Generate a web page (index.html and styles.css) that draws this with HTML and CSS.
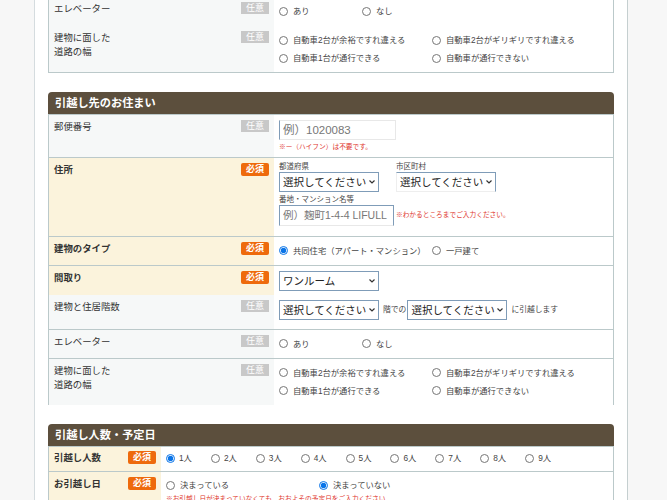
FILE: index.html
```html
<!DOCTYPE html>
<html lang="ja">

<head>
    <meta charset="UTF-8">
    <title>引越し見積もり</title>
    <link rel="stylesheet" href="styles.css">
</head>

<body>
    <div class="page">
        <!-- 現在のお住まい (top cut off by the scroll position) -->
        <section class="section section-cut">
            <table class="form-table">
                <tr class="row-plain row-short row-open">
                    <th><div class="label"><span>エレベーター</span><span class="badge">任意</span></div></th>
                    <td>
                        <div class="choices choices-lift">
                            <label><input type="radio" name="lift1">あり</label>
                            <label><input type="radio" name="lift1">なし</label>
                        </div>
                    </td>
                </tr>
                <tr class="row-road">
                    <th><div class="label"><span>建物に面した<br>道路の幅</span><span class="badge">任意</span></div></th>
                    <td>
                        <div class="choices choices-road">
                            <label><input type="radio" name="road1">自動車2台が余裕ですれ違える</label>
                            <label><input type="radio" name="road1">自動車2台がギリギリですれ違える</label>
                            <label><input type="radio" name="road1">自動車1台が通行できる</label>
                            <label><input type="radio" name="road1">自動車が通行できない</label>
                        </div>
                    </td>
                </tr>
            </table>
        </section>

        <section class="section">
            <h2 class="section-title">引越し先のお住まい</h2>
            <table class="form-table form-table-top">
                <tr class="row-zip">
                    <th><div class="label"><span>郵便番号</span><span class="badge">任意</span></div></th>
                    <td>
                        <input class="text-input zip-input" type="text" placeholder="例）1020083">
                        <p class="note note-zip">※ー（ハイフン）は不要です。</p>
                    </td>
                </tr>
                <tr class="row-address row-required">
                    <th><div class="label"><span>住所</span><span class="badge badge-required">必須</span></div></th>
                    <td class="address-cell">
                        <div class="address-selects">
                            <div>
                                <div class="sub-label">都道府県</div>
                                <select class="select"><option>選択してください</option></select>
                            </div>
                            <div>
                                <div class="sub-label">市区町村</div>
                                <select class="select select-off"><option>選択してください</option></select>
                            </div>
                        </div>
                        <div class="sub-label sub-label-street">番地・マンション名等</div>
                        <div class="street-line">
                            <input class="text-input street-input" type="text" placeholder="例）麹町1-4-4 LIFULL">
                            <span class="note">※わかるところまでご入力ください。</span>
                        </div>
                    </td>
                </tr>
                <tr class="row-type row-required">
                    <th><div class="label"><span>建物のタイプ</span><span class="badge badge-required">必須</span></div></th>
                    <td>
                        <div class="choices choices-road">
                            <label><input type="radio" name="type" checked>共同住宅（アパート・マンション）</label>
                            <label><input type="radio" name="type">一戸建て</label>
                        </div>
                    </td>
                </tr>
                <tr class="row-plan row-required row-open">
                    <th><div class="label"><span>間取り</span><span class="badge badge-required">必須</span></div></th>
                    <td><select class="select"><option>ワンルーム</option></select></td>
                </tr>
                <tr class="row-floor row-plain">
                    <th><div class="label"><span>建物と住居階数</span><span class="badge">任意</span></div></th>
                    <td>
                        <div class="floor-line">
                            <select class="select"><option>選択してください</option></select>
                            <span class="floor-text">階での</span>
                            <select class="select"><option>選択してください</option></select>
                            <span class="floor-text">に引越します</span>
                        </div>
                    </td>
                </tr>
                <tr class="row-plain row-short">
                    <th><div class="label"><span>エレベーター</span><span class="badge">任意</span></div></th>
                    <td>
                        <div class="choices choices-lift">
                            <label><input type="radio" name="lift2">あり</label>
                            <label><input type="radio" name="lift2">なし</label>
                        </div>
                    </td>
                </tr>
                <tr class="row-road row-road-last row-open">
                    <th><div class="label"><span>建物に面した<br>道路の幅</span><span class="badge">任意</span></div></th>
                    <td>
                        <div class="choices choices-road">
                            <label><input type="radio" name="road2">自動車2台が余裕ですれ違える</label>
                            <label><input type="radio" name="road2">自動車2台がギリギリですれ違える</label>
                            <label><input type="radio" name="road2">自動車1台が通行できる</label>
                            <label><input type="radio" name="road2">自動車が通行できない</label>
                        </div>
                    </td>
                </tr>
            </table>
        </section>

        <section class="section">
            <h2 class="section-title">引越し人数・予定日</h2>
            <table class="form-table form-table-top form-table-narrow">
                <tr class="row-people row-required">
                    <th><div class="label"><span>引越し人数</span><span class="badge badge-required">必須</span></div></th>
                    <td>
                        <div class="choices choices-people">
                            <label><input type="radio" name="people" checked>1人</label>
                            <label><input type="radio" name="people">2人</label>
                            <label><input type="radio" name="people">3人</label>
                            <label><input type="radio" name="people">4人</label>
                            <label><input type="radio" name="people">5人</label>
                            <label><input type="radio" name="people">6人</label>
                            <label><input type="radio" name="people">7人</label>
                            <label><input type="radio" name="people">8人</label>
                            <label><input type="radio" name="people">9人</label>
                        </div>
                    </td>
                </tr>
                <tr class="row-date row-required">
                    <th><div class="label"><span>お引越し日</span><span class="badge badge-required">必須</span></div></th>
                    <td>
                        <div class="choices choices-road">
                            <label><input type="radio" name="date">決まっている</label>
                            <label><input type="radio" name="date" checked>決まっていない</label>
                        </div>
                        <p class="note">※お引越し日が決まっていなくても、おおよその予定日をご入力ください</p>
                    </td>
                </tr>
            </table>
        </section>
    </div>
</body>

</html>
```

FILE: styles.css
```css
html, body {
    margin: 0;
    padding: 0;
    height: 500px;
    overflow: hidden;
    background: #f7f7f7;
    font-family: "Liberation Sans", "Noto Sans CJK JP", sans-serif;
    color: #444;
}

.page {
    box-sizing: border-box;
    width: 594px;
    min-height: 520px;
    margin-left: 34px;
    padding: 0 13px;
    background: #fff;
    border-left: 1px solid #d5dcdf;
    border-right: 1px solid #c5cfd0;
}

.section {
    margin-bottom: 19px;
}

.section-cut {
    margin-top: -3px;
}

.section-cut .form-table {
    border-bottom: 1px solid #bbc9ca;
}

.section-title {
    height: 22px;
    margin: 0;
    padding-left: 7px;
    background: #5c4f3d;
    border-radius: 4px 4px 0 0;
    color: #fff;
    font-size: 11.2px;
    font-weight: 700;
    line-height: 23px;
}

.form-table {
    width: 100%;
    table-layout: fixed;
    border-collapse: collapse;
    border-left: 1px solid #bbc9ca;
    border-right: 1px solid #bbc9ca;
}

.form-table-top {
    border-top: 1px solid #bbc9ca;
}

.form-table tr {
    border-bottom: 1px solid #bbc9ca;
}

.form-table tr.row-open {
    border-bottom: none;
}

.form-table th,
.form-table td {
    padding: 0;
    vertical-align: top;
}

.form-table th {
    width: 225px;
    background: #f6f8f8;
    font-weight: 400;
    text-align: left;
}

.form-table td {
    padding: 5px 0 0 5px;
    background: #fff;
}

.form-table-narrow th {
    width: 112px;
}

.form-table .row-required th {
    background: #fbf3dc;
    font-weight: 700;
}

.row-short { height: 29px; }
.row-road { height: 46px; }
.row-road-last { height: 47px; }
.row-zip { height: 43px; }
.row-address { height: 79px; }
.row-type { height: 29px; }
.row-plan { height: 30px; }
.row-floor { height: 34px; }
.row-people { height: 25px; }
.row-date { height: 30px; }

.label {
    display: flex;
    justify-content: space-between;
    align-items: flex-start;
    padding: 5px 5px 0 5px;
    font-size: 9.4px;
    line-height: 14px;
    color: #333;
}

.badge {
    flex: none;
    width: 28px;
    height: 12px;
    background: #c8c8c8;
    color: #fff;
    font-size: 9px;
    font-weight: 400;
    line-height: 12px;
    text-align: center;
}

.badge-required {
    height: 13px;
    background: #ee6a0c;
    border-radius: 2px;
    font-weight: 700;
    line-height: 13px;
}

.choices {
    display: grid;
    font-size: 8.3px;
    line-height: 18px;
}

.choices label {
    display: flex;
    align-items: center;
    white-space: nowrap;
}

.choices input {
    flex: none;
    width: 9px;
    height: 9px;
    margin: 0 5px 0 0;
    accent-color: #0a74e8;
}

.choices-lift { grid-template-columns: 83px 83px; }
.choices-road { grid-template-columns: 153px 153px; }
.choices-people { grid-template-columns: repeat(9, 44.9px); }

.form-table .row-people td { padding-top: 2px; }
.row-people .label { padding-top: 4px; }
.row-people input { margin-right: 4px; }
.form-table .row-date td { padding-top: 4px; }

.text-input {
    display: block;
    box-sizing: border-box;
    margin: 0;
    padding: 0 3px;
    border: 1px solid #7f9cb8;
    border-radius: 0;
    background: #fff;
    font-family: inherit;
    outline: none;
}

.text-input::placeholder {
    color: #777;
}

.zip-input {
    width: 117px;
    height: 20px;
    border-top-color: #e8e8e8;
    border-right-color: #e8e8e8;
    border-bottom-color: #e8e8e8;
    font-size: 11.5px;
}

.street-input {
    flex: none;
    width: 115px;
    height: 21px;
    border-bottom-color: #e8e8e8;
    font-size: 10.5px;
}

.note {
    margin: 0;
    color: #e0362c;
    font-size: 6.7px;
    line-height: 10px;
}

.note-zip {
    margin-top: 2px;
}

.form-table .address-cell {
    padding-top: 4px;
}

.address-selects {
    display: flex;
    gap: 17px;
}

.sub-label {
    height: 10px;
    color: #444;
    font-size: 7.5px;
    line-height: 10px;
}

.sub-label-street {
    margin-top: 3px;
}

.select {
    display: block;
    box-sizing: border-box;
    width: 100px;
    height: 20px;
    margin: 0;
    padding: 0 10px 0 3px;
    border: 1px solid #7f9cb8;
    border-radius: 0;
    background: #fff url("data:image/svg+xml,%3Csvg xmlns='http://www.w3.org/2000/svg' width='6' height='4'%3E%3Cpath d='M.5.5 3 3 5.5.5' fill='none' stroke='%23333' stroke-width='1.2'/%3E%3C/svg%3E") no-repeat right 3px center;
    color: #222;
    font-family: inherit;
    font-size: 10.5px;
    appearance: none;
}

.select-off {
    border-left-color: #eee;
    border-bottom-color: #eee;
}

.street-line {
    display: flex;
    align-items: center;
    gap: 2px;
}

.floor-line {
    display: flex;
    align-items: center;
    font-size: 7.8px;
    line-height: 20px;
    white-space: nowrap;
}

.floor-text {
    margin: 0 1px 0 4px;
}
```
